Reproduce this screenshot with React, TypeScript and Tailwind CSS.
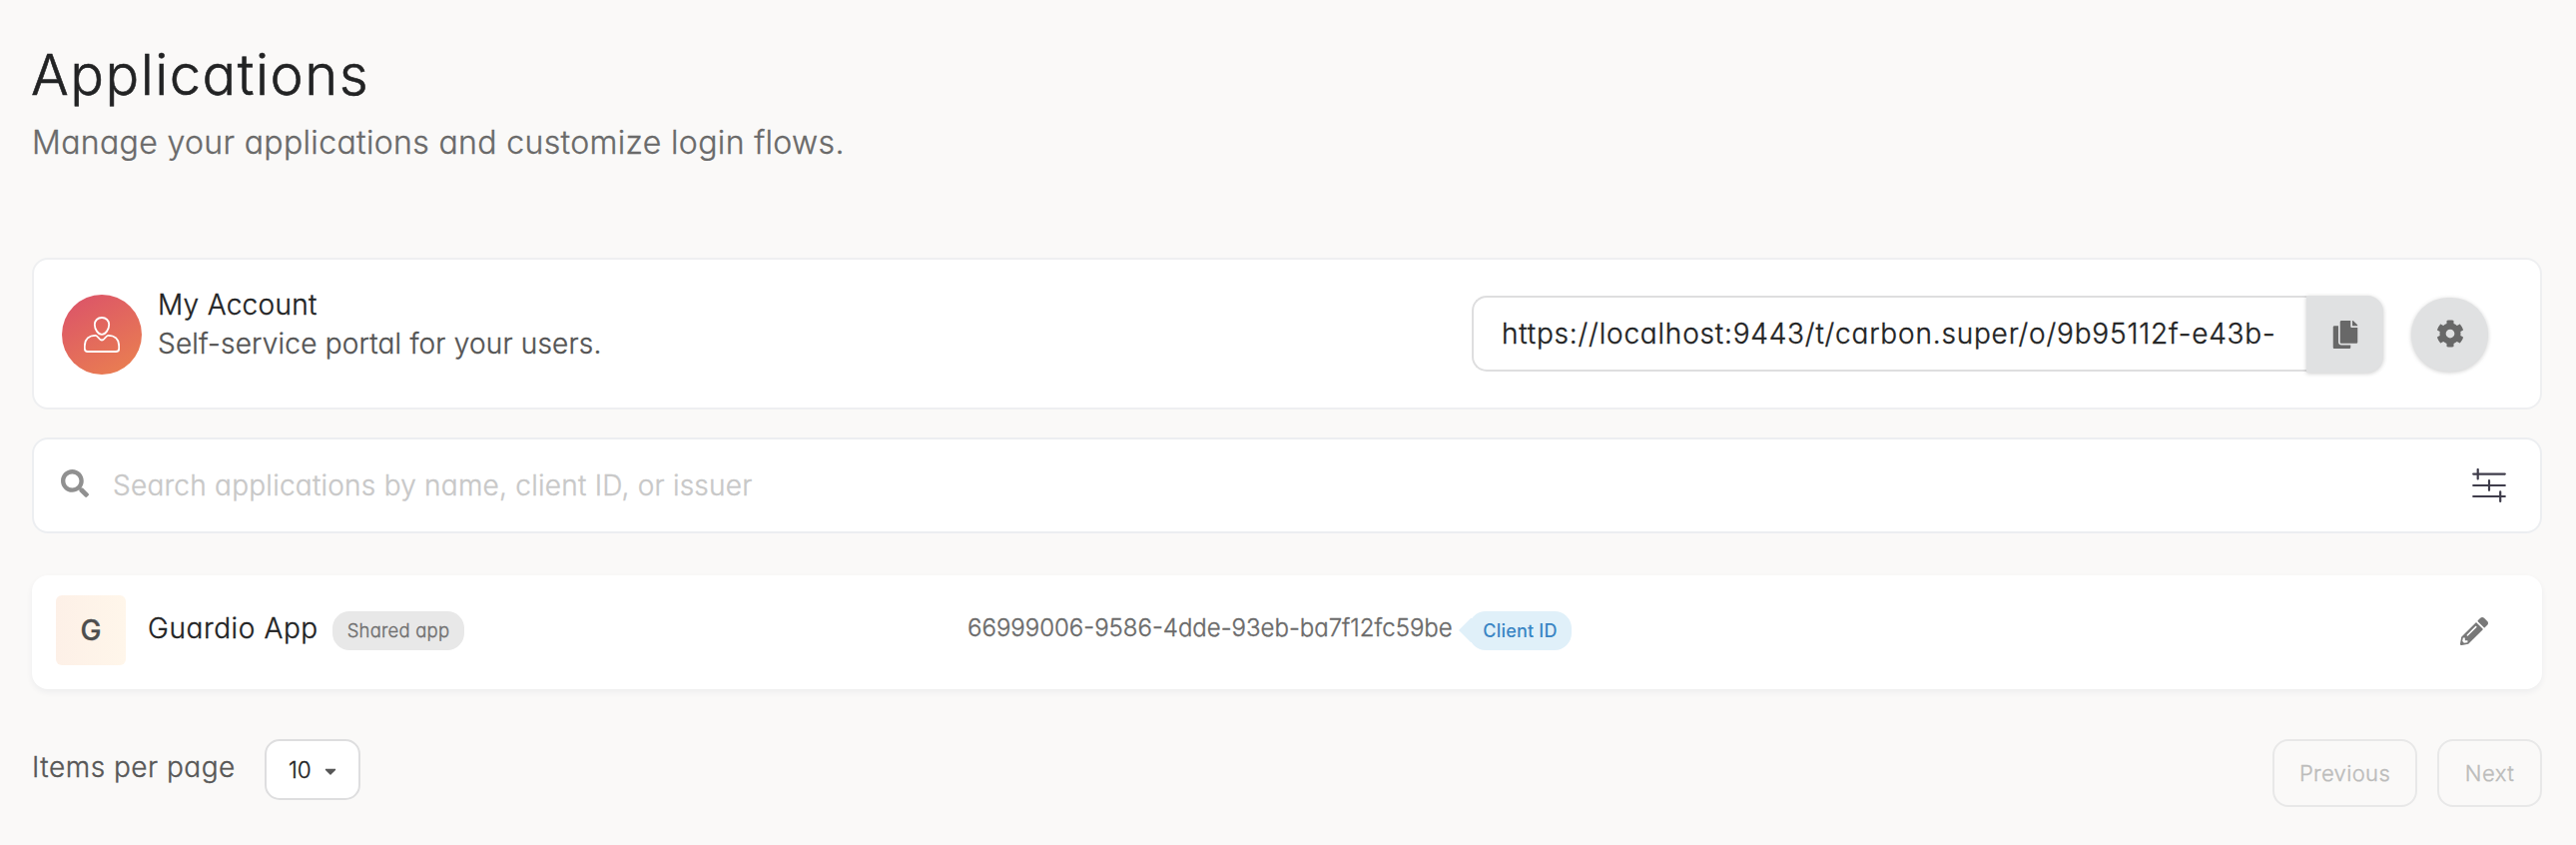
import React from "react";
import { FaSearch, FaCopy, FaCog, FaPencilAlt, FaCaretDown } from "react-icons/fa";

function UserIcon() {
  return (
    <svg viewBox="0 0 36 36" className="size-9" fill="none" stroke="#fff" strokeWidth="1.8" strokeLinejoin="round">
      <path d="M18 1c4.300 0 7.200 3 7.200 7 0 4.600-3.400 9.800-7.200 9.800S10.800 12.600 10.800 8c0-4 2.900-7 7.200-7Z" />
      <path d="M11.800 18.800c2.300 0 3.300 4.700 6.200 4.700s3.900-4.700 6.200-4.700c6.500 0 11 3.700 11 10.700v2.500c0 2-1 3-3 3H3.800c-2 0-3-1-3-3v-2.500c0-7 4.500-10.700 11-10.700Z" />
    </svg>
  );
}

function SlidersIcon() {
  return (
    <svg viewBox="0 0 34 34" className="h-[34px] w-[34px]" fill="none" stroke="#3f3d4b" strokeWidth="2.2" strokeLinecap="round">
      <path d="M1.200 5.600h31.600M1.200 17h31.600M1.200 28h31.600M5.700 1v9.500M17 12.200v9.600M28.200 23.300v9.600" />
    </svg>
  );
}

export default function App() {
  return (
    <div className="flex h-[846px] w-[2580px] flex-col bg-[#faf9f8] pr-[34px] pl-8 font-['Inter',sans-serif] font-light text-[#222324] [-webkit-text-stroke:0.35px] [font-feature-settings:'cv11']">
      <h1 className="-ml-px mt-[40px] h-[70px] text-[56px] leading-[70px] font-light tracking-[1.5px] [-webkit-text-stroke:0.6px]">
        Applications
      </h1>
      <p className="mt-[13px] h-10 text-[32px] leading-10 tracking-[0.35px] text-[#6a6a6a]">
        Manage your applications and customize login flows.
      </p>

      <section className="mt-[95px] flex h-[152px] items-start rounded-[16px] border-2 border-[#eeeff1] bg-white pl-7">
        <div className="mt-[35px] flex size-20 items-center justify-center rounded-full bg-linear-[150deg,#dc5568_8%,#ea8050_95%]">
          <UserIcon />
        </div>
        <div className="mt-[25px] ml-4">
          <div className="h-10 text-[28px] leading-10 tracking-[0.3px]">My Account</div>
          <div className="h-[38px] text-[28px] leading-[38px] tracking-[0.2px] text-[#545454]">Self-service portal for your users.</div>
        </div>
        <div className="mt-9 ml-auto flex h-[76px] w-[836px] items-center rounded-l-[15px] border-2 border-r-0 border-[#dededf] pl-7">
          <div className="w-[776px] overflow-hidden text-[28px] leading-[38px] tracking-[0.8px] whitespace-nowrap">
            https://localhost:9443/t/carbon.super/o/9b95112f-e43b-4
          </div>
        </div>
        <button className="mt-9 flex h-[77px] w-[77px] items-center justify-center rounded-r-[16px] bg-[#e0e1e2] shadow-[0_1px_4px_rgba(0,0,0,0.2)]">
          <FaCopy className="size-7 text-[#686868]" />
        </button>
        <button className="mt-[38px] mr-[52px] ml-7 flex h-[74px] w-[77px] items-center justify-center rounded-full bg-[#e0e1e2] shadow-[0_1px_4px_rgba(0,0,0,0.2)]">
          <FaCog className="mb-[3px] size-7 text-[#686868]" />
        </button>
      </section>

      <section className="mt-7 flex h-24 items-center rounded-[16px] border-2 border-[#eceef1] bg-white pr-[34px] pl-[27px]">
        <FaSearch className="mb-1 size-7 text-[#909090]" />
        <span className="ml-6 text-[28px] leading-[38px] tracking-[0.24px] text-[#c8c8c8]">
          Search applications by name, client ID, or issuer
        </span>
        <span className="ml-auto">
          <SlidersIcon />
        </span>
      </section>

      <section className="mt-[42px] flex h-[114px] items-center rounded-[16px] bg-white pr-[54px] pl-6 shadow-[0_3px_6px_rgba(40,50,90,0.06)]">
        <div className="mb-[4px] flex size-[70px] items-center justify-center rounded-[6px] bg-linear-to-r from-[#fdf0e7] to-[#fff6ea] text-[28px] font-medium text-[#4d4d4d]">
          G
        </div>
        <div className="mb-2 ml-[22px] w-[185px] text-[28px] leading-[38px] tracking-[0.6px]">Guardio App</div>
        <div className="mb-[3px] flex h-[39px] w-[132px] items-center justify-center rounded-[17px] bg-[#e8e8e8] pt-px text-[18.500px] tracking-[0.2px] text-[#707070]">
          Shared app
        </div>
        <div className="mb-[9px] ml-[504px] w-[492px] text-[24px] leading-[38px] whitespace-nowrap text-[#6a6a6a]">
          66999006-9586-4dde-93eb-ba7f12fc59be
        </div>
        <div className="mb-[4px] flex items-center">
          <svg viewBox="0 0 14 28" className="-mr-1 h-7 w-[14px]" fill="#e0f0f9">
            <path d="M0 14 12 2h2v24h-2Z" />
          </svg>
          <div className="flex h-[39px] w-[103px] items-center justify-center rounded-[17px] bg-[#e0f0f9] text-[18px] font-medium tracking-[0.2px] text-[#3a85c4] [-webkit-text-stroke:0]">
            Client ID
          </div>
        </div>
        <FaPencilAlt className="mb-[2px] ml-auto size-7 text-[#787878]" />
      </section>

      <footer className="mt-[50px] flex items-start">
        <span className="mt-2 w-[233px] text-[28px] leading-10 tracking-[0.5px] text-[#575757]">Items per page</span>
        <button className="flex h-[61px] w-24 items-center rounded-[15px] border-2 border-[#dededf] bg-white pl-[22px] text-[22.500px]">
          <span className="w-[35px] text-left">10</span>
          <FaCaretDown className="mt-[2px] h-[18px] w-[14px] text-[#565656]" />
        </button>
        <button className="ml-auto h-[68px] w-[145px] rounded-[16px] border-2 border-[#e8e8e8] text-[22px] tracking-[0.35px] text-[#bcbcbb]">
          Previous
        </button>
        <button className="ml-5 h-[68px] w-[105px] rounded-[16px] border-2 border-[#e8e8e8] text-[22px] tracking-[0.5px] text-[#bcbcbb]">
          Next
        </button>
      </footer>
    </div>
  );
}
